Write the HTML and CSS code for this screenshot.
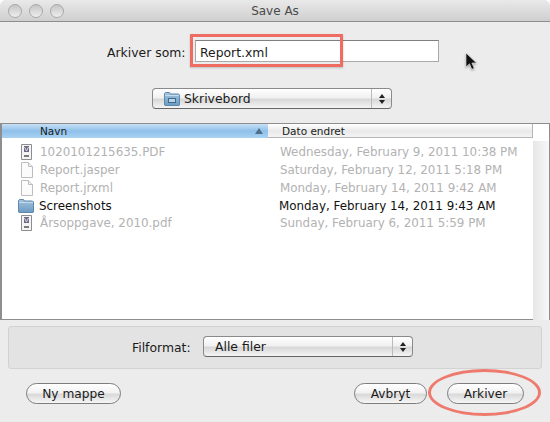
FILE: index.html
```html
<!DOCTYPE html>
<html lang="en">
<head>
    <meta charset="UTF-8">
    <title>Save As</title>
    <link rel="stylesheet" href="styles.css">
</head>
<body>
    <div class="dialog">
        <div class="titlebar">
            <div class="lights"><span></span><span></span><span></span></div>
            <div class="title">Save As</div>
        </div>

        <div class="name-row">
            <label>Arkiver som:</label>
            <div class="name-input">Report.xml</div>
        </div>

        <div class="folder-row">
            <div class="select folder-select">
                <div class="select-value">
                    <svg class="ico-folder-small" viewBox="0 0 16 14"><use href="#folder"/><rect x="4.500" y="6.500" width="7" height="4" fill="#bcd3e6" stroke="#3f6a90"/></svg>
                    Skrivebord
                </div>
                <div class="arrows"><i class="up"></i><i class="down"></i></div>
            </div>
        </div>

        <div class="browser">
            <div class="list-head">
                <div class="col-name">Navn<i class="sort"></i></div>
                <div class="col-date">Dato endret</div>
                <div class="col-rest"></div>
            </div>
            <div class="list-body">
                <div class="rows">
                    <div class="row off">
                        <div class="cell-name"><svg class="ico" viewBox="0 0 12 16"><use href="#pdf"/></svg>1020101215635.PDF</div>
                        <div class="cell-date">Wednesday, February 9, 2011 10:38 PM</div>
                    </div>
                    <div class="row off">
                        <div class="cell-name"><svg class="ico" viewBox="0 0 12 16"><use href="#doc"/></svg>Report.jasper</div>
                        <div class="cell-date">Saturday, February 12, 2011 5:18 PM</div>
                    </div>
                    <div class="row off">
                        <div class="cell-name"><svg class="ico" viewBox="0 0 12 16"><use href="#doc"/></svg>Report.jrxml</div>
                        <div class="cell-date">Monday, February 14, 2011 9:42 AM</div>
                    </div>
                    <div class="row on">
                        <div class="cell-name folder"><svg class="ico-folder" viewBox="0 0 16 14"><use href="#folder"/></svg>Screenshots</div>
                        <div class="cell-date">Monday, February 14, 2011 9:43 AM</div>
                    </div>
                    <div class="row off">
                        <div class="cell-name"><svg class="ico" viewBox="0 0 12 16"><use href="#pdf"/></svg>Årsoppgave, 2010.pdf</div>
                        <div class="cell-date">Sunday, February 6, 2011 5:59 PM</div>
                    </div>
                </div>
                <div class="scroll-track"></div>
            </div>
        </div>

        <div class="format-box">
            <label>Filformat:</label>
            <div class="select format-select">
                <div class="select-value">Alle filer</div>
                <div class="arrows"><i class="up"></i><i class="down"></i></div>
            </div>
        </div>

        <div class="buttons">
            <button class="btn new-folder">Ny mappe</button>
            <button class="btn cancel">Avbryt</button>
            <button class="btn save">Arkiver</button>
        </div>

        <!-- annotations drawn on top of the screenshot -->
        <div class="mark-rect"></div>
        <div class="mark-oval"></div>
        <svg class="cursor" viewBox="0 0 12 19"><path d="M1 1v14l3.500-3.200 2.300 5.500 2.400-1-2.300-5.300h4.600z" fill="#111" stroke="#eee" stroke-width=".6"/></svg>
    </div>

    <svg class="defs" width="0" height="0">
        <defs>
            <linearGradient id="folderFill" x1="0" y1="0" x2="0" y2="1">
                <stop offset="0" stop-color="#a4c4de"/>
                <stop offset="1" stop-color="#6b9ac2"/>
            </linearGradient>
        </defs>
        <symbol id="doc" viewBox="0 0 12 16">
            <path d="M.5.5h7l4 4v11h-11z" fill="#fbfbfb" stroke="#bdbdbd"/>
            <path d="M7.500.5v4h4" fill="#ececec" stroke="#bdbdbd"/>
        </symbol>
        <symbol id="pdf" viewBox="0 0 12 16">
            <path d="M.5.5h10v15h-10z" fill="#f4f4f4" stroke="#8e8e8e"/>
            <rect x="3" y="2" width="5" height="6" fill="#6c6a86"/>
            <path d="M3.500 3l2 4 2-4" fill="none" stroke="#d8d8e0"/>
            <rect x="3" y="11" width="5" height="2" fill="#7a7a7a"/>
        </symbol>
        <symbol id="folder" viewBox="0 0 16 14">
            <path d="M.5 13V1.500l1-1h4l1 1.500h8l1 1v10l-.5.500H1z" fill="url(#folderFill)" stroke="#5f88ad"/>
            <path d="M1 3.500h14" stroke="#c6dbea"/>
        </symbol>
    </svg>
</body>
</html>
```

FILE: styles.css
```css
/* General Styling */
* {
    box-sizing: border-box;
}

body {
    margin: 0;
    font-family: 'DejaVu Sans', Verdana, sans-serif;
    font-size: 12.4px;
    color: #1a1a1a;
    background: #fff;
}

.dialog {
    position: relative;
    width: 550px;
    height: 422px;
    overflow: hidden;
    background: #ececec;
    border-radius: 6px 6px 0 0;
}

/* Title bar */
.titlebar {
    position: relative;
    height: 22px;
    background: linear-gradient(to bottom, #e9e9e9, #cfcfcf);
    border-bottom: 1px solid #8e8e8e;
}

.lights {
    display: flex;
    gap: 7px;
    padding: 4px 0 0 8px;
}

.lights span {
    width: 14px;
    height: 14px;
    border-radius: 50%;
    border: 1px solid #a8a8a8;
    background: linear-gradient(to bottom, #c4c4c4, #eeeeee);
}

.title {
    position: absolute;
    top: 4px;
    left: 0;
    right: 0;
    font-size: 12px;
    text-align: center;
    color: #4a4a4a;
}

/* Name row */
.name-row {
    display: flex;
    align-items: center;
    height: 22px;
    margin-top: 18px;
    padding-left: 107px;
}

.name-row label {
    width: 88px;
    padding-top: 2px;
}

.name-input {
    width: 244px;
    height: 22px;
    padding: 4px 0 0 4px;
    background: #fff;
    border: 1px solid #a9a9a9;
    border-top-color: #7f7f7f;
}

/* Popups */
.select {
    display: flex;
    height: 21px;
    background: linear-gradient(to bottom, #ffffff, #f1f1f1 45%, #d8d8d8 55%, #f4f4f4);
    border: 1px solid #8a8a8a;
    border-bottom-color: #666;
    border-radius: 4px;
}

.select-value {
    flex: 1;
    display: flex;
    align-items: center;
    padding-left: 11px;
}

.arrows {
    width: 20px;
    display: flex;
    flex-direction: column;
    align-items: center;
    justify-content: center;
    gap: 2px;
    border-left: 1px solid #bbb;
}

.arrows .up {
    border: 3px solid transparent;
    border-top: 0;
    border-bottom: 4px solid #222;
}

.arrows .down {
    border: 3px solid transparent;
    border-bottom: 0;
    border-top: 4px solid #222;
}

.folder-row {
    margin-top: 26px;
    padding-left: 152px;
}

.folder-select {
    width: 240px;
}

.ico-folder-small {
    width: 16px;
    height: 14px;
    margin-right: 4px;
}

/* File list */
.browser {
    height: 197px;
    margin-top: 14px;
    background: #fff;
    border: 1px solid #8e8e8e;
    border-left: 2px solid #8e8e8e;
}

.list-head {
    display: flex;
    height: 14px;
    font-size: 10.5px;
    line-height: 15px;
}

.col-name {
    position: relative;
    width: 266px;
    padding-left: 38px;
    background: linear-gradient(to bottom, #c6dff5, #8fc0ea 50%, #a8d2f2);
}

.sort {
    position: absolute;
    right: 5px;
    top: 4px;
    border: 4px solid transparent;
    border-top: 0;
    border-bottom: 6px solid #4f6f8d;
}

.col-date {
    width: 265px;
    padding-left: 14px;
    border-right: 1px solid #b5b5b5;
    border-bottom: 1px solid #b5b5b5;
    background: linear-gradient(to bottom, #ffffff, #e9e9e9 55%, #f4f4f4);
}

.col-rest {
    flex: 1;
}

.list-body {
    display: flex;
}

.rows {
    width: 531px;
    padding-top: 5.5px;
    font-size: 11.9px;
}

.scroll-track {
    flex: 1;
    height: 179px;
    margin-top: 3px;
    background: linear-gradient(to right, #e6e6e6, #f8f8f8);
}

.row {
    display: flex;
    height: 17.75px;
    align-items: center;
}

.row.off {
    color: #b2b2b2;
}

.row.on {
    color: #111;
}

.cell-name {
    display: flex;
    align-items: center;
    width: 278px;
    padding-left: 19px;
}

.cell-name.folder {
    padding-left: 16px;
    width: 277px;
}

.cell-date {
    white-space: nowrap;
}

.ico {
    width: 12px;
    height: 16px;
    margin-right: 7px;
}

.ico-folder {
    width: 16px;
    height: 14px;
    margin-right: 5px;
}

.defs {
    position: absolute;
}

/* Format box */
.format-box {
    display: flex;
    align-items: center;
    width: 534px;
    height: 43px;
    margin: 6px 0 0 8px;
    padding-left: 123px;
    background: #e3e3e3;
    border: 1px solid #d2d2d2;
    border-radius: 3px;
}

.format-box label {
    width: 71px;
}

.format-select {
    width: 210px;
    margin-top: -2px;
}

/* Buttons */
.buttons {
    display: flex;
    margin-top: 14px;
    padding-left: 26px;
}

.btn {
    height: 21px;
    padding: 0;
    font-family: inherit;
    font-size: 12.2px;
    color: #1a1a1a;
    background: linear-gradient(to bottom, #ffffff, #f2f2f2 45%, #dadada 55%, #f6f6f6);
    border: 1px solid #7d7d7d;
    border-radius: 11px;
}

.new-folder {
    width: 95px;
}

.cancel {
    width: 73px;
    margin-left: 233px;
}

.save {
    width: 77px;
    margin-left: 20px;
}

/* Annotations */
.mark-rect {
    position: absolute;
    left: 190px;
    top: 34px;
    width: 153px;
    height: 33px;
    border: 3px solid #ee6c62;
    box-shadow: 0 1px 2px rgba(0, 0, 0, 0.2);
}

.mark-oval {
    position: absolute;
    left: 428px;
    top: 369px;
    width: 113px;
    height: 47px;
    border: 3px solid #ee7a6e;
    border-radius: 50%;
}

.cursor {
    position: absolute;
    left: 465px;
    top: 52px;
    width: 12px;
    height: 19px;
    filter: drop-shadow(0 1px 1px rgba(0, 0, 0, 0.35));
}
```
